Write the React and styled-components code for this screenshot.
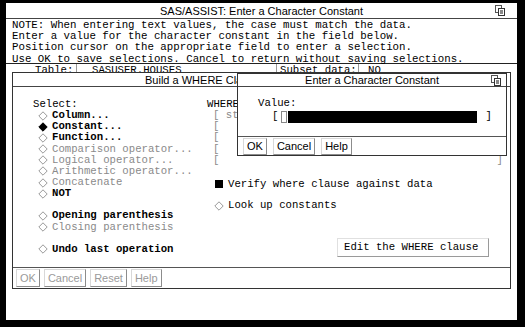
import React from "react";
import styled, { createGlobalStyle } from "styled-components";

const mono = `"Liberation Mono", "DejaVu Sans Mono", monospace`;
const sans = `"Liberation Sans", Arial, sans-serif`;

const GlobalStyle = createGlobalStyle`
  html, body {
    margin: 0;
    padding: 0;
    background: #000;
  }
  * {
    box-sizing: border-box;
  }
`;

const Screen = styled.div`
  width: 525px;
  height: 327px;
  background: #000;
  padding: 3px 8px 7px 6px;
  overflow: hidden;
`;

const MainWindow = styled.div`
  position: relative;
  height: 100%;
  background: #fff;
  display: flex;
  flex-direction: column;
`;

const TitleBar = styled.div`
  flex: none;
  height: ${(p) => p.$h || 15}px;
  display: grid;
  grid-template-columns: 1fr auto 1fr;
  align-items: center;
  border-bottom: 1px solid #444;
  font: 11px ${sans};
  color: #000;
  white-space: nowrap;
`;

const TitleText = styled.span`
  grid-column: 2;
  margin-right: ${(p) => p.$shift || 0}px;
`;

const IconSlot = styled.span`
  grid-column: 3;
  justify-self: end;
  display: flex;
  margin-right: ${(p) => p.$right || 6}px;
`;

const NoteBox = styled.div`
  flex: none;
  height: 45px;
  padding: 1px 0 0 6px;
  font: 10.75px/11.2px ${mono};
  color: #000;
  white-space: pre;
  border-bottom: 1px solid #222;
`;

const InfoRow = styled.div`
  flex: none;
  display: flex;
  height: 12px;
  padding-left: 29px;
  font: 10.67px/12px ${mono};
  color: #000;
  white-space: pre;
  overflow: hidden;
`;

const InfoCell = styled.span`
  width: ${(p) => p.$w}px;
  padding-left: ${(p) => p.$pad || 0}px;
  border-right: ${(p) => (p.$divider ? "1px solid #999" : "none")};
`;

const Window = styled.div`
  position: absolute;
  left: ${(p) => p.$x}px;
  top: ${(p) => p.$y}px;
  width: ${(p) => p.$w}px;
  height: ${(p) => p.$h}px;
  background: #fff;
  border: 1px solid #333;
  display: flex;
  flex-direction: column;
`;

const BuildBody = styled.div`
  flex: 1;
  display: grid;
  grid-template-columns: 174px 1fr;
  padding: 12px 0 0 20px;
  font: 10.67px/11.15px ${mono};
  color: #000;
  white-space: pre;
`;

const Column = styled.div`
  display: flex;
  flex-direction: column;
`;

const Line = styled.div`
  height: 11.15px;
  display: flex;
  align-items: center;
  padding-left: ${(p) => p.$indent || 0}px;
  margin-top: ${(p) => p.$gap || 0}px;
  font-weight: ${(p) => (p.$bold ? 700 : 400)};
  color: ${(p) => (p.$dim ? "#8a8a8a" : "#000")};
`;

const Spacer = styled.div`
  height: 11.15px;
`;

const BracketLine = styled.div`
  height: 11.15px;
  display: flex;
  justify-content: space-between;
  padding: 0 7px 0 6px;
  color: #8a8a8a;
`;

const Mark = styled.span`
  display: flex;
  margin-right: 4px;
`;

const EditButton = styled.div`
  align-self: flex-end;
  margin: 27px 21px 0 0;
  width: 152px;
  height: 19px;
  display: flex;
  align-items: center;
  padding-left: 6px;
  border: 1px solid;
  border-color: #e0e0e0 #9a9a9a #9a9a9a #e0e0e0;
  background: #fff;
`;

const ButtonBar = styled.div`
  flex: none;
  height: ${(p) => p.$h}px;
  display: flex;
  align-items: center;
  gap: ${(p) => p.$gap}px;
  padding-left: ${(p) => p.$pad}px;
  border-top: 1px solid #555;
`;

const Button = styled.div`
  height: ${(p) => p.$h || 17}px;
  display: flex;
  align-items: center;
  padding: 0 3px;
  font: 11px ${sans};
  color: ${(p) => (p.$disabled ? "#9a9a9a" : "#000")};
  border: 1px solid;
  border-color: #d8d8d8 #8c8c8c #8c8c8c #d8d8d8;
  background: #fff;
`;

const DialogBody = styled.div`
  flex: 1;
  padding: 11px 0 0 20px;
  font: 10.67px/11.3px ${mono};
  color: #000;
  white-space: pre;
`;

const FieldRow = styled.div`
  height: 13px;
  display: flex;
  align-items: center;
  padding-left: 14px;
  margin-top: 1px;
`;

const Cursor = styled.span`
  width: 6px;
  height: 12px;
  margin: 0 1px 0 3px;
  border: 1px solid #888;
`;

const BlackField = styled.span`
  width: 189px;
  height: 12px;
  background: #000;
  margin-right: 8px;
`;

const RestoreIcon = () => (
  <svg width="10" height="11" viewBox="0 0 10 11">
    <rect x="0.5" y="0.5" width="6" height="7" fill="#fff" stroke="#555" />
    <rect x="3.5" y="3.5" width="6" height="7" fill="#fff" stroke="#333" />
    <rect x="5" y="5" width="3" height="4" fill="#888" />
  </svg>
);

const Diamond = ({ filled }) => (
  <svg width="10" height="10" viewBox="0 0 10 10">
    <polygon
      points="5,0.8 9.2,5 5,9.2 0.8,5"
      fill={filled ? "#000" : "#fff"}
      stroke={filled ? "#000" : "#999"}
      strokeWidth="1"
    />
  </svg>
);

const Square = () => (
  <svg width="10" height="10" viewBox="0 0 10 10">
    <rect x="1" y="1" width="8" height="8" fill="#000" />
  </svg>
);

const choices = [
  { label: "Column...", bold: true },
  { label: "Constant...", bold: true, filled: true },
  { label: "Function...", bold: true },
  { label: "Comparison operator...", dim: true },
  { label: "Logical operator...", dim: true },
  { label: "Arithmetic operator...", dim: true },
  { label: "Concatenate", dim: true },
  { label: "NOT", bold: true },
];

const Option = ({ label, bold, dim, filled, indent = 5, gap = 0 }) => (
  <Line $indent={indent} $gap={gap} $bold={bold} $dim={dim}>
    <Mark>
      <Diamond filled={filled} />
    </Mark>
    {label}
  </Line>
);

const notes = [
  "NOTE: When entering text values, the case must match the data.",
  "Enter a value for the character constant in the field below.",
  "Position cursor on the appropriate field to enter a selection.",
  "Use OK to save selections. Cancel to return without saving selections.",
];

export default function App() {
  return (
    <Screen>
      <GlobalStyle />
      <MainWindow>
        <TitleBar $h={16}>
          <TitleText>SAS/ASSIST: Enter a Character Constant</TitleText>
          <IconSlot $right={12}>
            <RestoreIcon />
          </IconSlot>
        </TitleBar>
        <NoteBox>
          {notes.map((n) => (
            <div key={n}>{n}</div>
          ))}
        </NoteBox>
        <InfoRow>
          <InfoCell $w={42} $divider>
            Table:
          </InfoCell>
          <InfoCell $w={200} $pad={15} $divider>
            SASUSER.HOUSES
          </InfoCell>
          <InfoCell $w={82} $pad={3} $divider>
            Subset data:
          </InfoCell>
          <InfoCell $w={40} $pad={9}>
            NO
          </InfoCell>
        </InfoRow>

        <Window $x={6} $y={69} $w={499} $h={217}>
          <TitleBar $h={14}>
            <TitleText $shift={118}>Build a WHERE Clause</TitleText>
            <IconSlot>
              <RestoreIcon />
            </IconSlot>
          </TitleBar>
          <BuildBody>
            <Column>
              <Line>Select:</Line>
              {choices.map((c) => (
                <Option key={c.label} {...c} />
              ))}
              <Spacer />
              <Option label="Opening parenthesis" bold />
              <Option label="Closing parenthesis" dim />
              <Spacer />
              <Option label="Undo last operation" bold />
            </Column>
            <Column>
              <Line>WHERE</Line>
              <BracketLine>
                <span>[ st</span>
                <span>]</span>
              </BracketLine>
              {[0, 1, 2, 3].map((i) => (
                <BracketLine key={i}>
                  <span>[</span>
                  <span>]</span>
                </BracketLine>
              ))}
              <Line $indent={7} $gap={13}>
                <Mark>
                  <Square />
                </Mark>
                Verify where clause against data
              </Line>
              <Option label="Look up constants" indent={7} gap={10} />
              <EditButton>Edit the WHERE clause</EditButton>
            </Column>
          </BuildBody>
          <ButtonBar $h={21} $gap={4} $pad={3}>
            <Button $disabled $h={18}>OK</Button>
            <Button $disabled $h={18}>Cancel</Button>
            <Button $disabled $h={18}>Reset</Button>
            <Button $disabled $h={18}>Help</Button>
          </ButtonBar>
        </Window>

        <Window $x={231} $y={70} $w={270} $h={83}>
          <TitleBar $h={13}>
            <TitleText>Enter a Character Constant</TitleText>
            <IconSlot $right={5}>
              <RestoreIcon />
            </IconSlot>
          </TitleBar>
          <DialogBody>
            <div>Value:</div>
            <FieldRow>
              [
              <Cursor />
              <BlackField />]
            </FieldRow>
          </DialogBody>
          <ButtonBar $h={19} $gap={6} $pad={5}>
            <Button>OK</Button>
            <Button>Cancel</Button>
            <Button>Help</Button>
          </ButtonBar>
        </Window>
      </MainWindow>
    </Screen>
  );
}
